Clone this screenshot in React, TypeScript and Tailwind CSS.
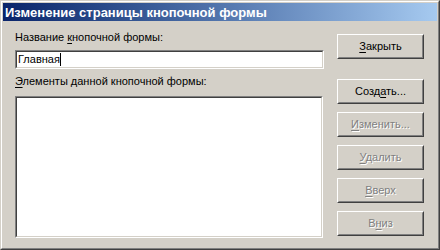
import React from 'react'

const font = { fontFamily: '"Liberation Sans", Arial, sans-serif' }

function Btn({ children, disabled }: { children: React.ReactNode; disabled?: boolean }) {
  return (
    <div className="w-[87px] h-[25px] border border-t-white border-l-white border-r-[#404040] border-b-[#404040]">
      <div className="h-full border border-t-[#d4d0c8] border-l-[#d4d0c8] border-r-[#808080] border-b-[#808080] flex items-center justify-center">
        <span
          className={
            disabled
              ? 'text-[11px] leading-[13px] text-[#808080] [text-shadow:1px_1px_0_#fff]'
              : 'text-[11px] leading-[13px] text-black'
          }
        >
          {children}
        </span>
      </div>
    </div>
  )
}

function Sunken({ className, children }: { className: string; children?: React.ReactNode }) {
  return (
    <div className={`border border-t-[#808080] border-l-[#808080] border-r-white border-b-white ${className}`}>
      <div className="h-full border border-t-[#404040] border-l-[#404040] border-r-[#d4d0c8] border-b-[#d4d0c8] bg-white">
        {children}
      </div>
    </div>
  )
}

export default function App() {
  return (
    <div style={font} className="w-[440px] h-[250px] bg-[#d4d0c8] border border-t-[#d4d0c8] border-l-[#d4d0c8] border-r-[#404040] border-b-[#404040]">
      <div className="h-full border border-t-white border-l-white border-r-[#808080] border-b-[#808080] p-px flex flex-col">
        <div className="h-[18px] bg-linear-to-r from-[#0a246a] to-[#a6caf0] flex items-center pl-[2px]">
          <span className="text-white font-bold text-[13px] leading-[15px]">
            Изменение страницы кнопочной формы
          </span>
        </div>
        <div className="flex pl-[12px]">
          <div className="w-[309px] flex flex-col pt-[10px]">
            <div className="text-[11px] leading-[13px] text-black mb-[6px]">
              Название <span className="underline underline-offset-2">к</span>нопочной формы:
            </div>
            <Sunken className="h-[19px]">
              <div className="flex items-center h-full pl-[1px] text-[11px] leading-[13px] text-black">
                Главная<span className="inline-block w-px h-[13px] bg-black" />
              </div>
            </Sunken>
            <div className="text-[11px] leading-[13px] text-black mt-[6px] mb-[8px]">
              <span className="underline underline-offset-2">Э</span>лементы данной кнопочной формы:
            </div>
            <Sunken className="w-[308px] h-[142px]" />
          </div>
          <div className="ml-[13px] pt-[13px] flex flex-col">
            <Btn>
              <span className="underline underline-offset-2">З</span>акрыть
            </Btn>
            <div className="mt-[20px] flex flex-col gap-[8px]">
              <Btn>
                Созд<span className="underline underline-offset-2">а</span>ть...
              </Btn>
              <Btn disabled>
                <span className="underline underline-offset-2">И</span>зменить...
              </Btn>
              <Btn disabled>
                <span className="underline underline-offset-2">У</span>далить
              </Btn>
              <Btn disabled>
                <span className="underline underline-offset-2">В</span>верх
              </Btn>
              <Btn disabled>
                В<span className="underline underline-offset-2">н</span>из
              </Btn>
            </div>
          </div>
        </div>
      </div>
    </div>
  )
}
